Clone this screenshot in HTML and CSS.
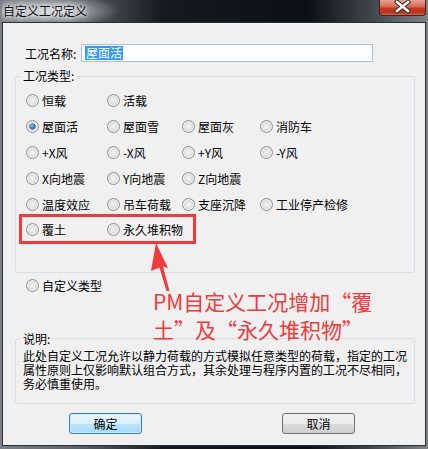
FILE: index.html
```html
<!DOCTYPE html>
<html lang="zh-CN">
<head>
    <meta charset="UTF-8">
    <title>自定义工况定义</title>
    <link rel="stylesheet" href="styles.css">
</head>
<body>

    <div class="window">
        <div class="titlebar">
            <span class="title">自定义工况定义</span>
            <div class="close">
                <svg width="47" height="16" viewBox="0 0 47 16">
                    <path d="M18 3 L29 12 M29 3 L18 12" stroke="#3a2a28" stroke-width="4.5" stroke-linecap="square"/>
                    <path d="M18 3 L29 12 M29 3 L18 12" stroke="#fff" stroke-width="2.5" stroke-linecap="square"/>
                </svg>
            </div>
        </div>

        <div class="client">
            <div class="name-row">
                <span class="name-label">工况名称:</span>
                <div class="textbox"><span class="sel">屋面活</span></div>
            </div>

            <fieldset class="group types">
                <legend>工况类型:</legend>
                <div class="radio-grid">
                    <label class="opt"><span class="radio"></span>恒载</label>
                    <label class="opt"><span class="radio"></span>活载</label>
                    <span></span><span></span>

                    <label class="opt"><span class="radio checked"></span>屋面活</label>
                    <label class="opt"><span class="radio"></span>屋面雪</label>
                    <label class="opt"><span class="radio"></span>屋面灰</label>
                    <label class="opt"><span class="radio"></span>消防车</label>

                    <label class="opt"><span class="radio"></span>+X风</label>
                    <label class="opt"><span class="radio"></span>-X风</label>
                    <label class="opt"><span class="radio"></span>+Y风</label>
                    <label class="opt"><span class="radio"></span>-Y风</label>

                    <label class="opt"><span class="radio"></span>X向地震</label>
                    <label class="opt"><span class="radio"></span>Y向地震</label>
                    <label class="opt"><span class="radio"></span>Z向地震</label>
                    <span></span>

                    <label class="opt"><span class="radio"></span>温度效应</label>
                    <label class="opt"><span class="radio"></span>吊车荷载</label>
                    <label class="opt"><span class="radio"></span>支座沉降</label>
                    <label class="opt"><span class="radio"></span>工业停产检修</label>

                    <label class="opt"><span class="radio"></span>覆土</label>
                    <label class="opt"><span class="radio"></span>永久堆积物</label>
                </div>
            </fieldset>

            <label class="opt custom"><span class="radio"></span>自定义类型</label>

            <fieldset class="group note">
                <legend>说明:</legend>
                <p>此处自定义工况允许以静力荷载的方式模拟任意类型的荷载，指定的工况<br>属性原则上仅影响默认组合方式，其余处理与程序内置的工况不尽相同，<br>务必慎重使用。</p>
            </fieldset>

            <div class="buttons">
                <button class="btn default">确定</button>
                <button class="btn">取消</button>
            </div>
        </div>

        <!-- red markup drawn over the dialog -->
        <svg class="markup" width="428" height="449" viewBox="0 0 428 449">
            <rect x="20.5" y="215.5" width="174" height="27" fill="none" stroke="#ef3b3b" stroke-width="3"/>
            <polygon points="156,243 168,268 163,266.5 169.5,291 166.5,291 159.5,267.5 151,271" fill="#ef3b3b"/>
        </svg>
        <div class="callout">PM自定义工况增加“覆<br>土”及“永久堆积物”</div>
    </div>

</body>
</html>
```

FILE: styles.css
```css
* { box-sizing: border-box; }
body { margin: 0; font-family: "Noto Sans CJK SC", "Noto Sans", sans-serif; font-size: 12px; color: #000; }

.window {
    position: relative; width: 428px; height: 449px; padding: 0 2px 3px;
    background: linear-gradient(to right, #7c8187 0%, #5d6268 18%, #151a21 38%, #0b1018 72%, #3e4349 86%, #7f8387 100%);
}

.titlebar { height: 22px; display: flex; justify-content: space-between; align-items: flex-start; margin: 0 -2px 0 0; padding-left: 1px;
    background: radial-gradient(ellipse 70px 16px at 48px 11px, rgba(230,234,238,0.85), rgba(230,234,238,0) 100%); }
.title { line-height: 21px; color: #111; text-shadow: 0 0 4px #fff, 0 0 6px #fff; }
.close { width: 47px; height: 16px; margin-right: 2px; border: 1px solid #4a2118; border-top: none; border-radius: 0 0 4px 4px;
    background: linear-gradient(#e7a493 0%, #d36a52 45%, #c3361c 55%, #b8361f 85%, #d36a4e 100%); }
.close svg { display: block; margin-top: -1px; margin-left: -1px; }

.client { height: 424px; border: 1px solid #2b3036; background: #f0f0f0; padding-top: 21px; }

.name-row { display: flex; align-items: center; height: 18px; padding-left: 22px; }
.name-label { width: 56px; }
.textbox { width: 292px; height: 18px; background: #fff; border: 1px solid #a9c2d9; padding: 1px 0 0 3px; line-height: 14px; }
.sel { background: #3399ff; color: #fff; display: inline-block; padding: 0 1px; }

.group { margin: 0 10px 0 12px; padding: 0; border: 1px solid #d5dfe5; border-radius: 3px; min-width: 0; }
.group legend { padding: 0 2px; margin-left: 5px; line-height: 14px; }
.types { margin-top: 7px; }
.note { margin-top: 34px; }

.radio-grid { display: grid; grid-template-columns: 81px 75px 78px 1fr; grid-auto-rows: 25.8px; padding: 5px 0 29px 10px; }
.opt { display: flex; align-items: center; gap: 3px; white-space: nowrap; }
.custom { height: 24px; padding-left: 23px; margin-top: 1px; }

.radio { width: 13px; height: 13px; border-radius: 50%; border: 1px solid #8e9092; position: relative; flex: none;
    background: radial-gradient(circle at 50% 50%, #f6f6f6 0, #e6e6e6 35%, #cfcfcf 75%, #bdbdbd 100%);
    box-shadow: inset 0 0 0 1px #f4f4f4; }
.radio.checked::after { content: ""; position: absolute; left: 3px; top: 3px; width: 5px; height: 5px; border-radius: 50%;
    background: radial-gradient(circle at 40% 35%, #8fd0ff 0, #2c86cf 45%, #0c4a80 100%); box-shadow: 0 0 0 0.5px #0b3a63; }

.note p { margin: 0; padding: 3px 0 12px 7px; line-height: 14px; }

.buttons { display: flex; margin-top: 9px; padding-left: 66px; gap: 140px; }
.btn { width: 73px; height: 21px; font: inherit; font-size: 12px; padding: 0; border: 1px solid #707070; border-radius: 3px; color: #000;
    background: linear-gradient(#f2f2f2 0%, #ebebeb 50%, #dddddd 50%, #cfcfcf 100%); }
.btn.default { border-color: #3c7fb1; box-shadow: inset 0 0 0 1px #c8ebfc;
    background: linear-gradient(#eaf6fd 0%, #d9f0fc 50%, #bee6fd 50%, #a7d9f5 100%); }

.markup { position: absolute; left: 0; top: 0; pointer-events: none; }
.callout { position: absolute; left: 153px; top: 287px; font-size: 21px; line-height: 28px; color: #ef3b3b; white-space: nowrap; }
```
